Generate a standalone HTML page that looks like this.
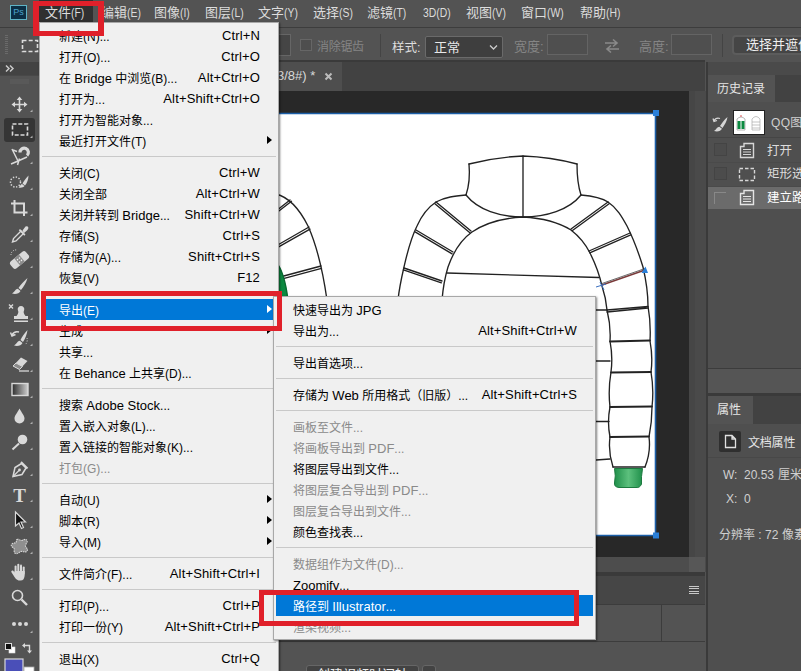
<!DOCTYPE html>
<html lang="zh-CN">
<head>
<meta charset="utf-8">
<title>Photoshop - 导出路径到 Illustrator</title>
<style>
*{box-sizing:border-box;margin:0;padding:0}
html,body{width:801px;height:671px;overflow:hidden;background:#535353}
body{font-family:"Liberation Sans","Noto Sans CJK SC",sans-serif;font-size:12px;color:#ddd;position:relative}
.abs{position:absolute}
#menubar{left:0;top:0;width:801px;height:28px;background:#535353;border-bottom:1px solid #3d3d3d}
#menubar span{position:absolute;top:4px;font-size:13px;line-height:18px;color:#dcdcdc;white-space:nowrap}
#menubar span i{font-style:normal;display:inline-block;transform:scaleX(.8);transform-origin:0 50%}
#optbar{left:0;top:29px;width:801px;height:31px;background:#535353}
#tabbar{left:39px;top:60px;width:666px;height:31px;background:#424242;border-top:2px solid #3a3a3a}
#doctab{left:39px;top:62px;width:303px;height:29px;background:#4e4e4e}
#workarea{left:39px;top:91px;width:650px;height:466px;background:#282828}
#canvas{left:200px;top:113px;width:456px;height:423px;background:#fff}
#toolbar{left:0;top:62px;width:39px;height:609px;background:#535353}
#rightpanel{left:706px;top:62px;width:95px;height:609px;background:#4f4f4f}
.menu{background:#f0f0f0;color:#000;box-shadow:1px 1px 2px rgba(0,0,0,.5);border:1px solid #a8a8a8}
.mi{position:absolute;left:2px;right:2px;height:21px;line-height:24px;font-size:12px;white-space:nowrap}
.mi .l{position:absolute;left:17px}
.mi .r{position:absolute;right:16px;top:-1px;font-size:13px;letter-spacing:.15px}
#submenu .mi .r{right:16px}
.mi b.e{font-weight:normal;font-size:13px;position:relative;top:-.5px}
.mi.dis{color:#8a8a8a}
.mi.hl{background:#0078d7;color:#fff}
.sep{position:absolute;left:2px;right:2px;height:1px;background:#c9c9c9}
.arr{position:absolute;right:4px;top:5.5px;width:0;height:0;border-left:5px solid #000;border-top:4.5px solid transparent;border-bottom:4.5px solid transparent}
.hl .arr{border-left-color:#fff}
.red{position:absolute;border:6px solid #e0202a}

.dim{color:#858585;font-size:13px;white-space:nowrap}
.ibox{background:#454545;border:1px solid #666}
.ibox2{background:#4f4f4f;border:1px solid #646464}
#hscroll{left:39px;top:557px;width:650px;height:15px;background:#4d4d4d}
#vscroll{left:689px;top:91px;width:17px;height:481px;background:#4a4a4a;border-left:6px solid #464646}
#timeline{left:39px;top:572px;width:666px;height:99px;background:#535353}

.pt{font-size:12px;color:#e6e6e6;white-space:nowrap;line-height:18px}
.hr{font-size:12.5px;color:#dcdcdc;white-space:nowrap;line-height:18px}
.pv{font-size:12px;color:#d0d0d0;white-space:nowrap;line-height:16px}
.cb{width:13px;height:13px;border:1px solid #444;background:#4c4c4c}
#rightpanel{overflow:hidden}
</style>
</head>
<body>
<div id="menubar" class="abs">
<div class="abs" style="left:10px;top:5px;width:17px;height:15px;background:#0b2f45;border:1px solid #5fb4c6;color:#4da3cc;font-size:9px;line-height:13px;text-align:center">Ps</div>
<div class="abs" style="left:39px;top:0;width:54px;height:22px;background:#303030"></div>
<span style="left:45px">文件<i>(F)</i></span>
<span style="left:101px">编辑<i>(E)</i></span>
<span style="left:154px">图像<i>(I)</i></span>
<span style="left:205px">图层<i>(L)</i></span>
<span style="left:258px">文字<i>(Y)</i></span>
<span style="left:313px">选择<i>(S)</i></span>
<span style="left:367px">滤镜<i>(T)</i></span>
<span style="left:423px"><i>3D(D)</i></span>
<span style="left:466px">视图<i>(V)</i></span>
<span style="left:521px">窗口<i>(W)</i></span>
<span style="left:580px">帮助<i>(H)</i></span>
</div>
<div id="optbar" class="abs">
<div class="abs" style="left:5px;top:6px;width:3px;height:20px;background:repeating-linear-gradient(#6a6a6a 0 1px,transparent 1px 2px)"></div>
<svg class="abs" style="left:20px;top:9px" width="20" height="16" viewBox="0 0 20 16"><rect x="2.5" y="2.5" width="15" height="11" fill="none" stroke="#ddd" stroke-width="1.6" stroke-dasharray="4 2.2"/></svg>
<div class="abs ibox" style="left:262px;top:5px;width:29px;height:22px"></div>
<div class="abs" style="left:300px;top:10px;width:12px;height:12px;border:1px solid #666;background:#4e4e4e"></div>
<span class="abs dim" style="left:317px;top:8px;font-size:12px;letter-spacing:-.3px">消除锯齿</span>
<div class="abs" style="left:380px;top:5px;width:1px;height:23px;background:#444"></div>
<span class="abs" style="left:392px;top:8px;color:#ddd;font-size:12.5px">样式:</span>
<div class="abs" style="left:425px;top:7px;width:78px;height:22px;background:#3e3e3e;border:1px solid #6a6a6a;border-radius:2px;color:#e8e8e8;font-size:13px;line-height:22px;padding-left:8px">正常<svg class="abs" style="right:4px;top:7px" width="9" height="7" viewBox="0 0 9 7"><path d="M1 1.5 L4.5 5 L8 1.5" fill="none" stroke="#ccc" stroke-width="1.3"/></svg></div>
<span class="abs dim" style="left:514px;top:7px;font-size:13px">宽度:</span>
<div class="abs ibox2" style="left:547px;top:5px;width:41px;height:21px"></div>
<svg class="abs" style="left:603px;top:9px" width="18" height="16" viewBox="0 0 18 16"><path d="M2 5 H13 M10 1.5 L14 5 L10 8.5 M16 11 H5 M8 7.5 L4 11 L8 14.5" fill="none" stroke="#8a8a8a" stroke-width="1.6"/></svg>
<span class="abs dim" style="left:639px;top:7px;font-size:13px">高度:</span>
<div class="abs ibox2" style="left:671px;top:5px;width:41px;height:21px"></div>
<div class="abs" style="left:722px;top:5px;width:1px;height:23px;background:#444"></div>
<div class="abs" style="left:732px;top:6px;width:80px;height:20px;background:#454545;border:2px solid #5c5c5c;border-radius:4px;color:#f0f0f0;font-size:13px;line-height:16px;padding-left:12px;white-space:nowrap">选择并遮住</div>
</div>
<div id="tabbar" class="abs"></div>
<div id="doctab" class="abs"><span class="abs" style="left:238px;top:6px;font-size:13px;color:#d8d8d8;white-space:nowrap">3/8#) *</span>
<svg class="abs" style="left:285px;top:10px" width="9" height="9" viewBox="0 0 9 9"><path d="M1.5 1.5 L7.5 7.5 M7.5 1.5 L1.5 7.5" stroke="#bbb" stroke-width="2"/></svg></div>
<div id="workarea" class="abs"></div>
<div id="hscroll" class="abs"></div>
<div id="vscroll" class="abs"></div>
<div class="abs" style="left:689px;top:557px;width:16px;height:15px;background:#575757"></div>
<div id="canvas" class="abs"></div>
<!--DRAWING-->
<svg class="abs" style="left:0;top:0" width="801" height="671" viewBox="0 0 801 671">
<defs><linearGradient id="cuff" x1="0" x2="1"><stop offset="0" stop-color="#1f8f4a"/><stop offset=".5" stop-color="#5cc07d"/><stop offset="1" stop-color="#1f8f4a"/></linearGradient></defs>
<g fill="none" stroke="#222" stroke-width="1.35" stroke-linecap="round">
<!-- left jacket sleeve (partial) -->
<path d="M276,194 C288,197 299,208 308,226 C317,246 323,272 327,300"/>
<path d="M276,211 L290,200 M276,213.300 L291.500,201.300"/>
<path d="M276,246 L309,227 M276,248.300 L310,229.200"/>
<path d="M280,277 L321,266 M280.500,279.300 L321.500,268.300"/>
<path d="M276,262 C283,270 286,284 288,300 L276,300 Z" fill="#0c8a41" stroke="#0a6a32"/>
<!-- collar -->
<path d="M469,164 Q496,157 523,156 Q551,157 577,164"/>
<path d="M469,164 C470,175 469,186 466,195"/>
<path d="M577,164 C577,175 578,186 581,195"/>
<path d="M466,195 C478,210 500,217 523,217 C546,217 569,210 581,195"/>
<path d="M523,156 L523,217"/>
<!-- outer silhouette -->
<path d="M466,195 C455,196 445,197 436,202 C427,208 421,217 417,226 C410,240 407,254 404,267 C401,280 399,290 398,300"/>
<path d="M581,195 C592,196 602,198 608,202 C617,208 622,217 627,226 C634,240 639,254 643,267 C646,280 648,295 648,306 Q651,323 650,341 Q653,357 651,372 Q654,389 652,407 Q652,422 649,437 Q651,452 645,467"/>
<!-- inner arch (body/sleeve seam) -->
<path d="M442,300 C443,288 445,277 448,267 C454,250 462,239 472,232 C487,222 505,218 523,217 C541,218 558,222 571,230 C580,237 586,245 590,253 C596,265 600,277 602,286 Q606,298 607,310 Q611,326 610,341 Q613,357 611,372 Q608,390 610,407 Q607,422 610,437 Q608,452 613,467"/>
<!-- body horizontal -->
<path d="M447,273 L599,277.500"/>
<!-- left sleeve quilting -->
<path d="M436,202 L471,231 M434.900,203.700 L469.900,232.700"/>
<path d="M416,230 L453,252 M415.100,231.900 L452.100,253.900"/>
<path d="M404,268 L442,281 M403.400,269.900 L441.400,282.900"/>
<!-- right sleeve quilting -->
<path d="M608,202 L571,229 M609.100,203.700 L572.100,230.700"/>
<path d="M630,233 L589,251 M630.800,234.900 L589.800,252.900"/>
<path d="M607,310 L648,306.500 M607,312 L648,308"/>
<path d="M610,341.500 L650,340.500" stroke-width="1.800"/>
<path d="M611,372.500 L651,372" stroke-width="1.800"/>
<path d="M610,407 L652,406.500" stroke-width="1.800"/>
<path d="M610,437 L649,436.500" stroke-width="1.800"/>
<path d="M613,467 L645,467" stroke-width="1.500"/>
<!-- body stubs right of submenu -->
<path d="M596,310 L607,310 M596,361 L610,361 M596,421.500 L609,421.500 M596,460 L610,459"/>
</g>
<path d="M602,285 L645,270" stroke="#7a3a3a" stroke-width="1.6"/>
<path d="M602,283.500 L645,268.500" stroke="#444" stroke-width="0.8"/>
<path d="M641.500,273 L648,273 L645.500,266.500 Z" fill="#2a7fd8"/>
<path d="M596,287 L606,284 M600,282 L604,290" stroke="#3a6fc0" stroke-width="1"/>
<path d="M614.500,468.500 L642.500,468.500 Q641,477 641.500,484 Q640,488 636,487.500 L619,487.500 Q614,487 614.500,483 Q616,476 614.500,468.500 Z" fill="url(#cuff)" stroke="#1c7a3f" stroke-width="1"/>
<!-- canvas blue outline -->
<path d="M276,113.500 L655.500,113.500 L655.500,535.500 L276,535.500" fill="none" stroke="#1c5fa8" stroke-width="1.6"/>
<rect x="653" y="110" width="6" height="6" fill="#2a7fd8"/>
<rect x="653" y="532.500" width="6" height="6" fill="#2a7fd8"/>
</svg>
<!--/DRAWING-->
<div id="timeline" class="abs">
<div class="abs" style="left:0;top:0;width:666px;height:4px;background:#3a3a3a"></div>
<div class="abs" style="left:0;top:4px;width:666px;height:28px;background:#464646"></div>
<div class="abs" style="left:650px;top:14px;width:10px;height:8px;background:repeating-linear-gradient(#c8c8c8 0 1px,transparent 1px 2.33px)"></div>
<div class="abs" style="left:0;top:32px;width:666px;height:1px;background:#3c3c3c"></div>
<div class="abs" style="left:622px;top:32px;width:1px;height:37px;background:#3c3c3c"></div>
<div class="abs" style="left:0;top:69px;width:666px;height:1px;background:#3c3c3c"></div>
<div class="abs" style="left:267px;top:93px;width:113px;height:22px;background:#434343;border:1px solid #666;border-radius:3px;color:#eee;font-size:13px;line-height:17px;text-align:center;white-space:nowrap">创建视频时间轴</div>
<div class="abs" style="left:383px;top:93px;width:14px;height:22px;background:#434343;border:1px solid #666;border-radius:3px"></div>
</div>
<div id="toolbar" class="abs">
<!--TOOLS-->
<svg class="abs" style="left:0;top:-62px" width="39" height="671" viewBox="0 0 39 671">
<rect x="0" y="62" width="39" height="13" fill="#434343"/>
<path d="M6,65.500 L9,68.500 L6,71.500 M10,65.500 L13,68.500 L10,71.500" fill="none" stroke="#c8c8c8" stroke-width="1.5"/>
<rect x="0" y="75" width="39" height="1" fill="#484848"/>
<rect x="10" y="79" width="19" height="5" fill="#5e5e5e" opacity=".6"/>
<rect x="4" y="118" width="31" height="24" rx="3" fill="#353535"/>
<g stroke="#d9d9d9" stroke-width="1.6" fill="#d9d9d9"><path d="M19.500,98 V111 M13,104.500 H26" fill="none"/><path d="M19.500,96.500 L22.300,100 H16.700 Z M19.500,112.500 L22.300,109 H16.700 Z M11.500,104.500 L15,101.700 V107.300 Z M27.500,104.500 L24,101.700 V107.300 Z" stroke="none"/></g>
<path d="M32.500,109.5 L32.500,112 L30,112 Z" fill="#b0b0b0"/>
<rect x="12.500" y="124" width="15" height="11" fill="none" stroke="#d9d9d9" stroke-width="1.6" stroke-dasharray="4 1.800"/>
<path d="M32.500,135.5 L32.500,138 L30,138 Z" fill="#b0b0b0"/>
<g fill="none" stroke="#d9d9d9" stroke-width="1.500"><path d="M12,149 L18,161 L11,164 M13,150 L17,151.500 M18,161 L27,157 M17.500,165 L19.500,158.500"/><path d="M20,152.500 a4.200,4.200 0 1 1 7,3" stroke-width="3.200"/></g>
<path d="M32.500,161.5 L32.500,164 L30,164 Z" fill="#b0b0b0"/>
<circle cx="15.500" cy="182" r="5" fill="none" stroke="#d9d9d9" stroke-width="1.500" stroke-dasharray="1.300 1.600"/><path d="M28.500,175.500 C26,178 24,181 22.500,183.500 L25,185.500 C27,183 28.500,179 28.500,175.500 Z M22,184 C20.500,184.500 20,186.500 18.500,187.500 C21,188 23.500,187.500 24.500,186 Z" fill="#d9d9d9"/>
<path d="M32.500,187.5 L32.500,190 L30,190 Z" fill="#b0b0b0"/>
<path d="M14.500,200 V212.500 H27.500 M11,203.500 H24 V216" fill="none" stroke="#d9d9d9" stroke-width="2"/>
<path d="M32.500,213.5 L32.500,216 L30,216 Z" fill="#b0b0b0"/>
<path d="M12.500,242 L13.500,238.500 L21,231 L23.500,233.500 L16,241 Z" fill="none" stroke="#d9d9d9" stroke-width="1.400"/><path d="M20,229 L25.500,234.500 L24.300,235.700 L18.800,230.200 Z M22.500,230.500 L25.500,226.500 Q27.500,225.500 28.300,227.300 Q28.800,228.800 27,230.500 L24,233 Z" fill="#d9d9d9"/>
<path d="M32.500,239.5 L32.500,242 L30,242 Z" fill="#b0b0b0"/>
<g transform="rotate(-40 19.500 260)"><rect x="9.500" y="255.500" width="20" height="9" rx="2.500" fill="#d9d9d9"/><rect x="16.500" y="255.500" width="6" height="9" fill="#8c8c8c"/><circle cx="18.200" cy="258.500" r=".8" fill="#eee"/><circle cx="20.800" cy="258.500" r=".8" fill="#eee"/><circle cx="18.200" cy="261.500" r=".8" fill="#eee"/><circle cx="20.800" cy="261.500" r=".8" fill="#eee"/></g><path d="M11,255 a5,5 0 0 1 6,-5" fill="none" stroke="#d9d9d9" stroke-width="1" stroke-dasharray="1 1.300"/>
<path d="M32.500,265.5 L32.500,268 L30,268 Z" fill="#b0b0b0"/>
<path d="M27.500,278 C24,281 20.500,285 18.500,288 L21,290 C23.500,287 26.500,282.500 27.500,278 Z M17.800,288.800 C15.500,289 15,291.500 12,293.500 C15.500,294.500 19.500,293.500 20.500,291 Z" fill="#d9d9d9"/>
<path d="M32.500,291.5 L32.500,294 L30,294 Z" fill="#b0b0b0"/>
<path d="M16.500,316 C18.500,313.500 18.800,312 17.800,310 a3.300,3.300 0 1 1 6.400,0 C23.200,312 23.500,313.500 25.500,316 H28 V319 H14 V316 Z M14,320.500 H28 V322 H14 Z" fill="#d9d9d9"/><path d="M9,304.500 L13,308.500 M13,304.500 L9,308.500" stroke="#d9d9d9" stroke-width="1.400"/>
<path d="M32.500,317.5 L32.500,320 L30,320 Z" fill="#b0b0b0"/>
<path d="M27.500,330 C24.500,333 22,337 20.500,340 L23,342 C25,339 27,334.500 27.500,330 Z M19.800,340.800 C17.500,341 17,343.500 14,345.500 C17.500,346.500 21.500,345.500 22.500,343 Z" fill="#d9d9d9"/><path d="M19,332 a6,6 0 0 0 -7,3 M10.500,332.500 L12,336 L15.500,334.500" fill="none" stroke="#d9d9d9" stroke-width="1.500"/><path d="M27,338 a7,7 0 0 1 -2,7" fill="none" stroke="#d9d9d9" stroke-width="1" stroke-dasharray="1 1.500"/>
<path d="M32.500,343.5 L32.500,346 L30,346 Z" fill="#b0b0b0"/>
<path d="M13,366 L21,357.500 L27.500,361 L19.500,369.500 Z" fill="#d9d9d9"/><path d="M13,366 L16,363 L22.500,366.500 L19.500,369.500 Z" fill="#8a8a8a" stroke="#d9d9d9" stroke-width="1"/><path d="M19,371 H29" stroke="#d9d9d9" stroke-width="1.300"/>
<path d="M32.500,369.5 L32.500,372 L30,372 Z" fill="#b0b0b0"/>
<defs><linearGradient id="gr" x1="0" x2="1"><stop offset="0" stop-color="#2c2c2c"/><stop offset="1" stop-color="#cfcfcf"/></linearGradient></defs><rect x="12" y="383.500" width="16" height="12" fill="url(#gr)" stroke="#d9d9d9" stroke-width="1.400"/>
<path d="M32.500,395.5 L32.500,398 L30,398 Z" fill="#b0b0b0"/>
<path d="M19.500,408.500 C21.500,412.500 24.500,415.500 24.500,418.500 a5,5 0 0 1 -10,0 C14.500,415.500 17.500,412.500 19.500,408.500 Z" fill="#d9d9d9"/>
<path d="M32.500,421.5 L32.500,424 L30,424 Z" fill="#b0b0b0"/>
<circle cx="22.500" cy="439.500" r="4.800" fill="#d9d9d9"/><path d="M19,443.500 L12.500,449.500" stroke="#d9d9d9" stroke-width="2"/>
<path d="M32.500,447.5 L32.500,450 L30,450 Z" fill="#b0b0b0"/>
<path d="M13,476.500 L15,467.500 L21.500,463.500 L26,468 L22,474.500 Z" fill="none" stroke="#d9d9d9" stroke-width="1.500"/><path d="M13,476.500 L19,470.500" stroke="#d9d9d9" stroke-width="1.200"/><circle cx="19.500" cy="470" r="1.400" fill="#d9d9d9"/><path d="M21,462 L27.500,468.500" stroke="#d9d9d9" stroke-width="2"/>
<path d="M32.500,473.5 L32.500,476 L30,476 Z" fill="#b0b0b0"/>
<text x="19.500" y="501.500" text-anchor="middle" font-family="Liberation Serif, serif" font-weight="bold" font-size="19" fill="#d9d9d9">T</text>
<path d="M32.500,499.5 L32.500,502 L30,502 Z" fill="#b0b0b0"/>
<path d="M15.500,512 L15.500,526 L19,523 L21.500,528.500 L23.500,527.500 L21,522 L25.500,522 Z" fill="#111" stroke="#d9d9d9" stroke-width="1.200"/>
<path d="M32.500,525.5 L32.500,528 L30,528 Z" fill="#b0b0b0"/>
<path d="M17,539.500 C19,538.500 20,541 22,540.500 C24,539.500 26,538.500 27,540.500 C28,543 25,544 25.500,546 C26,548 28.500,549 27,551 C25.500,553 23,551 21,551.500 C19,552 18,554.500 15.500,553.500 C13,552.500 15,550 14,548.500 C13,547 10.500,546.500 11.500,544.500 C12.500,542.500 15,543.500 16,542.500 C17,541.500 15.500,540.500 17,539.500 Z" fill="#8f8f8f" stroke="#d9d9d9" stroke-width="1.100" stroke-dasharray="1.500 .8"/>
<path d="M32.500,551.5 L32.500,554 L30,554 Z" fill="#b0b0b0"/>
<g fill="#d9d9d9"><rect x="14.600" y="565.500" width="2" height="8" rx="1"/><rect x="17.300" y="563.800" width="2" height="9" rx="1"/><rect x="20" y="564.500" width="2" height="9" rx="1"/><rect x="22.700" y="566.500" width="2" height="8" rx="1"/><path d="M14.600,571 H24.700 V575 Q24.500,580.500 20.500,580.500 H18.500 Q16,580 14.500,577 L11.300,572 Q11,570 13,570.500 L14.600,572.500 Z"/></g>
<path d="M32.500,577.5 L32.500,580 L30,580 Z" fill="#b0b0b0"/>
<circle cx="17.500" cy="595.500" r="5" fill="none" stroke="#d9d9d9" stroke-width="1.600"/><path d="M21.500,599.500 L27,605" stroke="#d9d9d9" stroke-width="2.400"/>
<circle cx="14" cy="624" r="2" fill="#d9d9d9"/><circle cx="20" cy="624" r="2" fill="#d9d9d9"/><circle cx="26" cy="624" r="2" fill="#d9d9d9"/>
<path d="M32.500,630.5 L32.500,633 L30,633 Z" fill="#b0b0b0"/>
<rect x="9" y="647" width="6" height="6" fill="#fff" stroke="#ddd" stroke-width=".6"/><rect x="5.500" y="643.500" width="6" height="6" fill="#111" stroke="#ddd" stroke-width="1"/>
<path d="M24,645.500 H29.500 V651" fill="none" stroke="#d9d9d9" stroke-width="1.400"/><path d="M22,645.500 L25,643 V648 Z M29.500,653.500 L27,650.500 H32 Z" fill="#d9d9d9"/>
<rect x="24" y="667" width="10" height="6" fill="#fff" stroke="#aaa" stroke-width=".8"/>
<rect x="5" y="659" width="18" height="14" fill="#4a4fb8" stroke="#d8d8d8" stroke-width="1.200"/>
</svg>
<!--/TOOLS-->
</div>
<div id="rightpanel" class="abs">
<!--RIGHT-->
<div class="abs" style="left:0;top:0;width:2px;height:609px;background:#3a3a3a"></div>
<div class="abs" style="left:2px;top:0;width:93px;height:13px;background:#4a4a4a"></div>
<div class="abs" style="left:2px;top:13px;width:93px;height:27px;background:#424242"></div>
<div class="abs" style="left:2px;top:13px;width:67px;height:27px;background:#535353"></div>
<span class="abs pt" style="left:11px;top:18px">历史记录</span>
<!-- snapshot row -->
<svg class="abs" style="left:6px;top:53px" width="18" height="18" viewBox="0 0 18 18"><path d="M15.500,2 C12.500,4.500 9.500,8.500 8,11 L10.500,13 C12.500,10 15,6 15.500,2 Z M7.300,11.800 C5,12 4.500,14.500 2,16 C5.500,17 9,16 10,13.800 Z" fill="#d6d6d6"/><path d="M8,3.500 a5,5 0 0 0 -6,2.500 M1,3.500 L2,6.500 L5,5.500" fill="none" stroke="#d6d6d6" stroke-width="1.300"/></svg>
<div class="abs" style="left:27px;top:48px;width:32px;height:25px;background:#fff;border:1px solid #222"></div>
<svg class="abs" style="left:27px;top:49px" width="32" height="23" viewBox="0 0 32 23"><path d="M4,8 Q8,4 12,8 V19 H4 Z" fill="#fff" stroke="#999" stroke-width=".7"/><rect x="4.500" y="10" width="3" height="8" fill="#0c8a41"/><rect x="8.500" y="10" width="3" height="8" fill="#0c8a41"/><path d="M7,5 h2" stroke="#d55" stroke-width="1"/><path d="M19,8 Q23,3 27,8 V19 H19 Z M19,11 H27 M19,14 H27 M19,17 H27" fill="none" stroke="#aaa" stroke-width=".7"/></svg>
<span class="abs" style="left:65px;top:51px;font-size:12px;color:#d0d0d0;white-space:nowrap;letter-spacing:.3px">QQ图片</span>
<div class="abs" style="left:2px;top:75px;width:93px;height:1px;background:#454545"></div>
<!-- row 1 -->
<div class="abs cb" style="left:8px;top:81px"></div>
<svg class="abs" style="left:33px;top:80px" width="16" height="17" viewBox="0 0 16 17"><path d="M1.500,4.500 H5 V1.500 H14.500 V15.500 H1.500 Z" fill="none" stroke="#d6d6d6" stroke-width="1.400"/><path d="M4,7.500 H12 M4,10 H12 M4,12.500 H12" stroke="#d6d6d6" stroke-width="1.200"/></svg>
<span class="abs hr" style="left:61px;top:80px">打开</span>
<div class="abs" style="left:2px;top:100px;width:93px;height:1px;background:#4a4a4a"></div>
<!-- row 2 -->
<div class="abs cb" style="left:8px;top:105px"></div>
<svg class="abs" style="left:32px;top:105px" width="18" height="15" viewBox="0 0 18 15"><rect x="1.500" y="1.500" width="15" height="12" fill="none" stroke="#d6d6d6" stroke-width="1.400" stroke-dasharray="3.500 2"/></svg>
<span class="abs hr" style="left:61px;top:103px">矩形选框</span>
<div class="abs" style="left:2px;top:124px;width:93px;height:1px;background:#4a4a4a"></div>
<!-- row 3 highlighted -->
<div class="abs" style="left:2px;top:125px;width:93px;height:22px;background:#6b6b6b"></div>
<div class="abs" style="left:8px;top:130px;width:12px;height:12px;border-left:1px solid #888;border-top:1px solid #888"></div>
<svg class="abs" style="left:33px;top:127px" width="16" height="17" viewBox="0 0 16 17"><path d="M1.500,4.500 H5 V1.500 H14.500 V15.500 H1.500 Z" fill="none" stroke="#e4e4e4" stroke-width="1.400"/><path d="M4,7.500 H12 M4,10 H12 M4,12.500 H12" stroke="#e4e4e4" stroke-width="1.200"/></svg>
<span class="abs hr" style="left:61px;top:127px;color:#fff">建立路径</span>
<!-- history footer -->
<div class="abs" style="left:2px;top:306px;width:93px;height:1px;background:#3c3c3c"></div>
<div class="abs" style="left:2px;top:307px;width:93px;height:24px;background:#555"></div>
<div class="abs" style="left:2px;top:331px;width:93px;height:3px;background:#3a3a3a"></div>
<!-- properties -->
<div class="abs" style="left:2px;top:334px;width:93px;height:28px;background:#424242"></div>
<div class="abs" style="left:2px;top:334px;width:45px;height:28px;background:#535353"></div>
<span class="abs pt" style="left:11px;top:339px">属性</span>
<div class="abs" style="left:13px;top:369px;width:22px;height:21px;background:#2f2f2f;border-radius:2px"></div>
<svg class="abs" style="left:18px;top:372px" width="13" height="15" viewBox="0 0 13 15"><path d="M1.500,1.500 H8 L11.500,5 V13.500 H1.500 Z M8,1.500 V5 H11.500" fill="none" stroke="#e0e0e0" stroke-width="1.300"/></svg>
<span class="abs" style="left:42px;top:371px;font-size:12px;color:#e6e6e6;white-space:nowrap;letter-spacing:-.2px">文档属性</span>
<div class="abs" style="left:2px;top:395px;width:93px;height:1px;background:#484848"></div>
<span class="abs pv" style="left:17px;top:405px">W:</span>
<span class="abs pv" style="left:38px;top:405px">20.53</span>
<span class="abs pv" style="left:72px;top:405px">厘米</span>
<span class="abs pv" style="left:20px;top:429px">X:</span>
<span class="abs pv" style="left:38px;top:429px">0</span>
<span class="abs pv" style="left:13px;top:465px">分辨率 :</span><span class="abs pv" style="left:59px;top:465px">72</span><span class="abs pv" style="left:76px;top:465px">像素/英寸</span>
<!--/RIGHT-->
</div>
<!--MENUS-->
<div id="mainmenu" class="abs menu" style="left:39px;top:22px;width:240px;height:660px">
<div class="mi" style="top:2px"><span class="l">新建(N)...</span><span class="r">Ctrl+N</span></div>
<div class="mi" style="top:23px"><span class="l">打开(O)...</span><span class="r">Ctrl+O</span></div>
<div class="mi" style="top:44px"><span class="l">在 <b class="e">Bridge</b> 中浏览(B)...</span><span class="r">Alt+Ctrl+O</span></div>
<div class="mi" style="top:65px"><span class="l">打开为...</span><span class="r">Alt+Shift+Ctrl+O</span></div>
<div class="mi" style="top:86px"><span class="l">打开为智能对象...</span></div>
<div class="mi" style="top:107px"><span class="l">最近打开文件(T)</span><i class="arr"></i></div>
<div class="sep" style="top:133px"></div>
<div class="mi" style="top:139px"><span class="l">关闭(C)</span><span class="r">Ctrl+W</span></div>
<div class="mi" style="top:160px"><span class="l">关闭全部</span><span class="r">Alt+Ctrl+W</span></div>
<div class="mi" style="top:181px"><span class="l">关闭并转到 <b class="e">Bridge</b>...</span><span class="r">Shift+Ctrl+W</span></div>
<div class="mi" style="top:202px"><span class="l">存储(S)</span><span class="r">Ctrl+S</span></div>
<div class="mi" style="top:223px"><span class="l">存储为(A)...</span><span class="r">Shift+Ctrl+S</span></div>
<div class="mi" style="top:244px"><span class="l">恢复(V)</span><span class="r">F12</span></div>
<div class="sep" style="top:270px"></div>
<div class="mi hl" style="top:276px"><span class="l">导出(E)</span><i class="arr"></i></div>
<div class="mi" style="top:297px"><span class="l">生成</span><i class="arr"></i></div>
<div class="mi" style="top:318px"><span class="l">共享...</span></div>
<div class="mi" style="top:339px"><span class="l">在 <b class="e">Behance</b> 上共享(D)...</span></div>
<div class="sep" style="top:365px"></div>
<div class="mi" style="top:371px"><span class="l">搜索 <b class="e">Adobe Stock</b>...</span></div>
<div class="mi" style="top:392px"><span class="l">置入嵌入对象(L)...</span></div>
<div class="mi" style="top:413px"><span class="l">置入链接的智能对象(K)...</span></div>
<div class="mi dis" style="top:434px"><span class="l">打包(G)...</span></div>
<div class="sep" style="top:460px"></div>
<div class="mi" style="top:466px"><span class="l">自动(U)</span><i class="arr"></i></div>
<div class="mi" style="top:487px"><span class="l">脚本(R)</span><i class="arr"></i></div>
<div class="mi" style="top:508px"><span class="l">导入(M)</span><i class="arr"></i></div>
<div class="sep" style="top:534px"></div>
<div class="mi" style="top:540px"><span class="l">文件简介(F)...</span><span class="r">Alt+Shift+Ctrl+I</span></div>
<div class="sep" style="top:566px"></div>
<div class="mi" style="top:572px"><span class="l">打印(P)...</span><span class="r">Ctrl+P</span></div>
<div class="mi" style="top:593px"><span class="l">打印一份(Y)</span><span class="r">Alt+Shift+Ctrl+P</span></div>
<div class="sep" style="top:619px"></div>
<div class="mi" style="top:625px"><span class="l">退出(X)</span><span class="r">Ctrl+Q</span></div>
</div>
<div id="submenu" class="abs menu" style="left:273px;top:296px;width:323px;height:344px">
<div class="mi" style="top:2px"><span class="l">快速导出为 <b class="e">JPG</b></span></div>
<div class="mi" style="top:23px"><span class="l">导出为...</span><span class="r">Alt+Shift+Ctrl+W</span></div>
<div class="sep" style="top:49px"></div>
<div class="mi" style="top:55px"><span class="l">导出首选项...</span></div>
<div class="sep" style="top:81px"></div>
<div class="mi" style="top:87px"><span class="l">存储为 <b class="e">Web</b> 所用格式（旧版）...</span><span class="r">Alt+Shift+Ctrl+S</span></div>
<div class="sep" style="top:113px"></div>
<div class="mi dis" style="top:119px"><span class="l">画板至文件...</span></div>
<div class="mi dis" style="top:140px"><span class="l">将画板导出到 <b class="e">PDF</b>...</span></div>
<div class="mi" style="top:161px"><span class="l">将图层导出到文件...</span></div>
<div class="mi dis" style="top:182px"><span class="l">将图层复合导出到 <b class="e">PDF</b>...</span></div>
<div class="mi dis" style="top:203px"><span class="l">图层复合导出到文件...</span></div>
<div class="mi" style="top:224px"><span class="l">颜色查找表...</span></div>
<div class="sep" style="top:250px"></div>
<div class="mi dis" style="top:256px"><span class="l">数据组作为文件(D)...</span></div>
<div class="mi" style="top:277px"><span class="l"><b class="e">Zoomify</b>...</span></div>
<div class="mi hl" style="top:298px"><span class="l">路径到 <b class="e">Illustrator</b>...</span></div>
<div class="mi dis" style="top:319px"><span class="l">渲染视频...</span></div>
</div>
<div class="red" style="left:33px;top:1px;width:70.5px;height:34.5px;border-width:5.5px 6px"></div>
<div class="red" style="left:41px;top:291px;width:241px;height:40px;border-width:5px"></div>
<div class="red" style="left:259px;top:590px;width:320px;height:36px;border-width:5px"></div>
<!--/MENUS-->
</body>
</html>
